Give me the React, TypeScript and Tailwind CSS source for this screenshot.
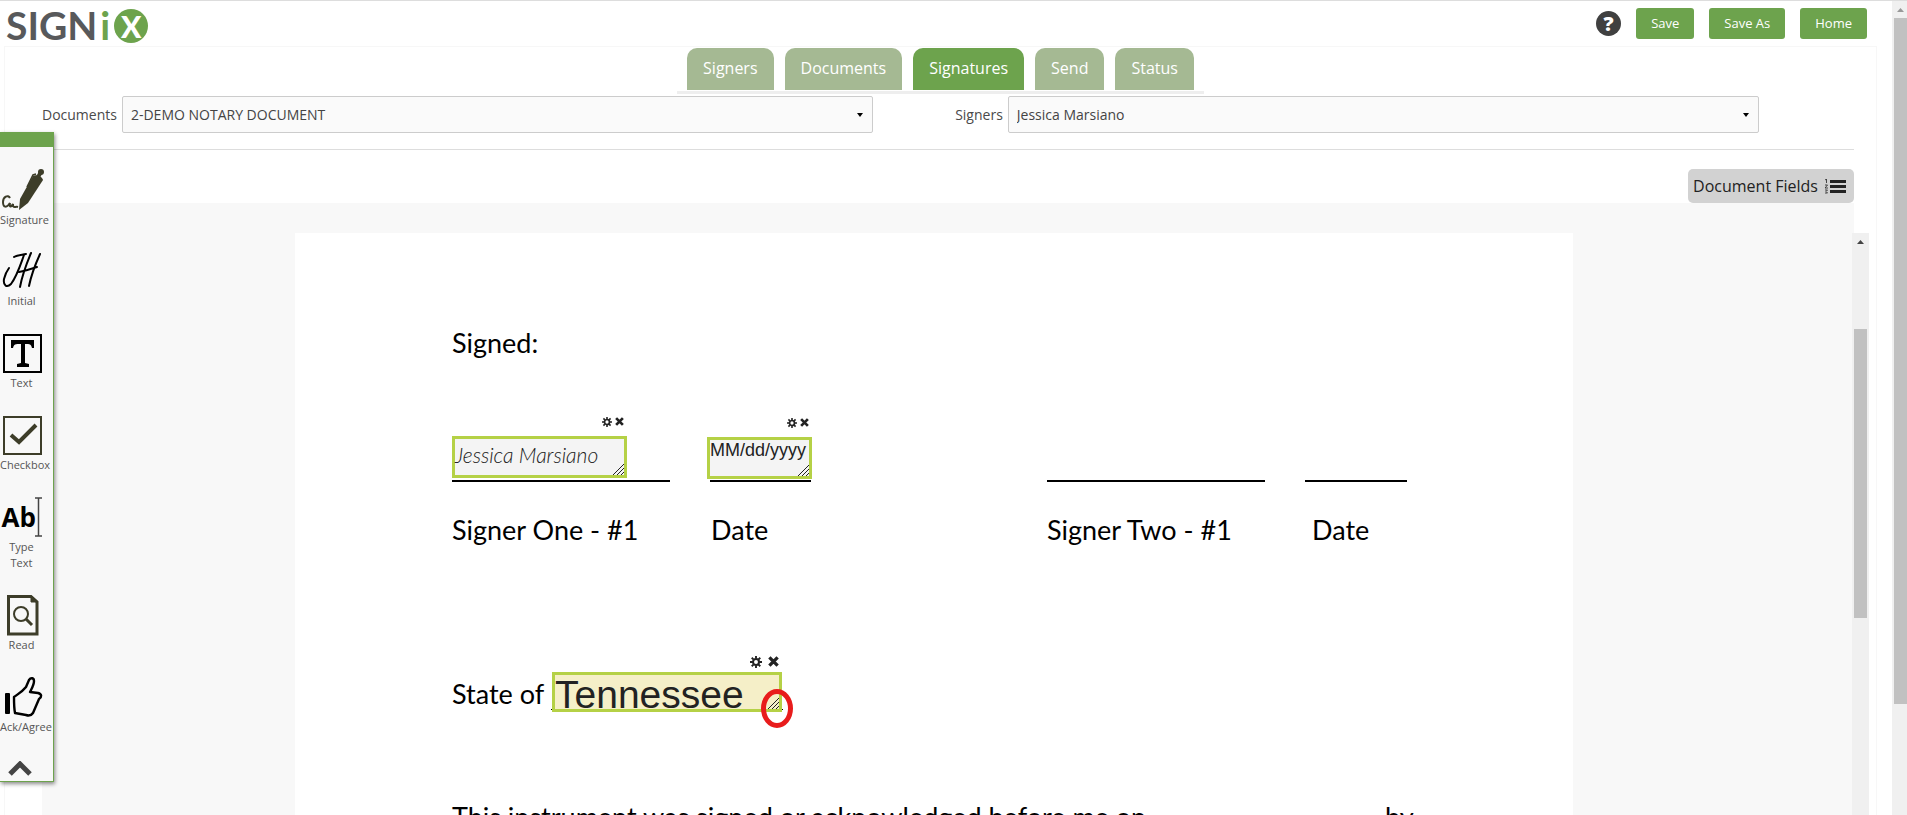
import { useState } from 'react'
import type { ReactNode } from 'react'

const TABS = ['Signers', 'Documents', 'Signatures', 'Send', 'Status']

const ACTIONS = ['Save', 'Save As', 'Home']

function SignatureIcon() {
  return (
    <svg className="w-11 h-11" viewBox="0 0 44 44" fill="none">
      <path d="M10 30C8 26 3 29 3 34C3 40 7 40 10 35C9 41 12 38 13 36C13 41 15 38 18 39" stroke="#3d3d29" strokeWidth="2" />
      <path d="M19 42L20 31L33 8C36 6 42 8 43 12L28 35Z" fill="#3d3d29" />
      <circle cx="41" cy="4" r="3" fill="#3d3d29" />
      <path d="M38 9L41 4" stroke="#3d3d29" strokeWidth="4" />
      <path d="M27 19L33 7L36 6" stroke="#3d3d29" strokeWidth="1.600" />
    </svg>
  )
}

function InitialIcon() {
  return (
    <svg className="w-11 h-11" viewBox="0 0 44 44" fill="none" stroke="#000" strokeWidth="2" strokeLinecap="round" strokeLinejoin="round">
      <path d="M14 8C17 6 21 6 26 5M24 6C20 17 17 27 11 35C7 39 3 37 4 30C5 26 6 23 9 19" />
      <path d="M31 4C26 16 22 27 20 38M40 5C35 16 31 27 29 37M19 23C25 22 31 20 37 18" />
    </svg>
  )
}

function TextIcon() {
  return (
    <svg className="w-11 h-11" viewBox="0 0 44 44" fill="none">
      <rect x="4" y="4" width="37" height="37" stroke="#000" strokeWidth="2" />
      <path d="M11 9H34V17H32C31 13 30 13 25 13V32L29 33V36H17V33L21 32V13C15 13 14 13 13 17H11Z" fill="#000" />
    </svg>
  )
}

function CheckboxIcon() {
  return (
    <svg className="w-11 h-11" viewBox="0 0 44 44" fill="none" stroke="#3d3d29">
      <rect x="4" y="4" width="37" height="37" strokeWidth="2" />
      <path d="M11 22L19 29L36 12" strokeWidth="4" />
    </svg>
  )
}

function ReadIcon() {
  return (
    <svg className="w-11 h-11" viewBox="0 0 44 44" fill="none" stroke="#3d3d29">
      <path d="M8.500 3.500H31L37 9V41H8.500Z" strokeWidth="3" />
      <path d="M31 3V9H38Z" fill="#3d3d29" />
      <circle cx="21" cy="21" r="7" strokeWidth="2" />
      <path d="M26 26L32 32" strokeWidth="3" />
    </svg>
  )
}

function AgreeIcon() {
  return (
    <svg className="w-11 h-11" viewBox="0 0 44 44" fill="none" stroke="#000" strokeLinejoin="round">
      <rect x="5" y="18" width="5" height="21" rx="1" fill="#000" stroke="none" />
      <path d="M14 22C18 19 22 17 26 12L29 5C31 2 34 3 34 6C34 10 32 13 30 17L38 18C42 19 42 22 39 24L33 38C31 41 29 41 26 40L15 38C14 33 14 27 14 22Z" strokeWidth="2.400" />
    </svg>
  )
}

function TypeTextIcon() {
  return (
    <span className="flex items-center w-11 h-11 pl-[2px] text-black">
      <span className="font-['Open_Sans'] font-bold text-[26px] leading-none">Ab</span>
      <svg className="w-[7px] h-10 shrink-0 -ml-px" viewBox="0 0 7 40" fill="none" stroke="#444" strokeWidth="1.500">
        <path d="M0 1H7M3.500 1V39M0 39H7" />
      </svg>
    </span>
  )
}

const TOOLS: { label: string; icon: ReactNode; height: string }[] = [
  { label: 'Signature', icon: <SignatureIcon />, height: 'h-[81px]' },
  { label: 'Initial', icon: <InitialIcon />, height: 'h-[82px]' },
  { label: 'Text', icon: <TextIcon />, height: 'h-[82px]' },
  { label: 'Checkbox', icon: <CheckboxIcon />, height: 'h-[82px]' },
  { label: 'Type Text', icon: <TypeTextIcon />, height: 'h-[98px]' },
  { label: 'Read', icon: <ReadIcon />, height: 'h-[82px]' },
  { label: 'Ack/Agree', icon: <AgreeIcon />, height: 'h-[82px]' },
]

function Logo() {
  return (
    <a href="#" aria-label="SIGNiX" className="flex items-center h-[35px] font-['Lato'] font-bold text-[39px] leading-none text-[#58595b]">
      SIGN<span className="ml-[3px] text-[#6da34d]">i</span>
      <span className="flex items-center justify-center size-[34px] ml-1 rounded-full bg-[#6da34d] text-white text-[30px] font-black">X</span>
    </a>
  )
}

function Picker({ id, label, value, className }: { id: string; label: string; value: string; className: string }) {
  return (
    <>
      <label htmlFor={id} className={`text-sm ${className}`}>
        {label}
      </label>
      <div className="relative flex-1">
        <select id={id} className="appearance-none w-full h-[37px] px-2 text-sm text-[#444] bg-[#fafafa] border border-[#ccc] rounded-xs">
          <option>{value}</option>
        </select>
        <svg className="absolute right-[10px] top-[17px] w-[6px] h-[4px] pointer-events-none" viewBox="0 0 6 4">
          <path d="M0 0H6L3 4Z" fill="#000" />
        </svg>
      </div>
    </>
  )
}

function Gear() {
  return (
    <svg className="size-full" viewBox="0 0 14 14" fill="none" stroke="#222">
      <circle cx="7" cy="7" r="3.500" strokeWidth="2.400" />
      <path d="M7 0V3M7 11V14M0 7H3M11 7H14M2 2L4 4M10 10L12 12M12 2L10 4M4 10L2 12" strokeWidth="2.200" />
    </svg>
  )
}

function Cross() {
  return (
    <svg className="size-full" viewBox="0 0 12 12" fill="none" stroke="#222" strokeWidth="3.600">
      <path d="M1.500 1.500L10.500 10.500M10.500 1.500L1.500 10.500" />
    </svg>
  )
}

// Field dropped on the page, with its settings and remove controls above it
function Field({ className, small, children }: { className: string; small?: boolean; children: ReactNode }) {
  return (
    <div className={`absolute border-3 border-[#b5d146] ${className}`}>
      <div className={`absolute right-0 flex ${small ? '-top-[22px] gap-[3px]' : '-top-[19px] gap-[6px]'}`}>
        <button aria-label="Field settings" className={small ? 'size-[10px]' : 'size-[12px]'}>
          <Gear />
        </button>
        <button aria-label="Remove field" className={small ? 'size-[9px]' : 'size-[11px]'}>
          <Cross />
        </button>
      </div>
      {children}
      <svg className="absolute right-0 bottom-0 size-[11px]" viewBox="0 0 11 11" fill="none" stroke="#222">
        <path d="M0 11L11 0M4 11L11 4M8 11L11 8" />
      </svg>
    </div>
  )
}

function Toolbox() {
  return (
    <aside className="absolute left-0 top-[131px] w-[54px] bg-[#f8f8f8] border-r border-b border-[#6da34d] shadow-[1px_2px_4px_rgba(0,0,0,0.45)]">
      <div className="h-[15px] bg-[#6da34d]" />
      <div className="flex flex-col pt-[21px]">
        {TOOLS.map((tool) => (
          <button key={tool.label} className={`flex flex-col items-center w-[43px] ${tool.height}`}>
            {tool.icon}
            <span className="w-full text-center text-[11px] leading-4 text-[#555]">{tool.label}</span>
          </button>
        ))}
      </div>
      <button aria-label="Collapse" className="block ml-2 mt-1 mb-[5px]">
        <svg className="w-6 h-[15px]" viewBox="0 0 24 15" fill="none" stroke="#444" strokeWidth="5">
          <path d="M2 13L12 3L22 13" />
        </svg>
      </button>
    </aside>
  )
}

function Page() {
  return (
    <article className="flex-1 ml-[253px] mr-[279px] pl-[157px] pt-[94px] bg-white font-['Lato'] text-[27px] leading-8 text-black whitespace-nowrap">
      <p>Signed:</p>

      <div className="flex h-[123px]">
        <div className="relative w-[218px] border-b-2">
          <Field small className="left-0 bottom-[2px] w-[175px] h-[42px] bg-[#f4f4f4]">
            <span className="block font-light italic text-[21px] text-[#222]">Jessica Marsiano</span>
          </Field>
        </div>
        <div className="relative w-[101px] ml-10 border-b-2">
          <Field small className="-left-[3px] bottom-px w-[105px] h-[42px] bg-[#f4f4f4]">
            <span className="block font-['Liberation_Sans'] text-[18px] leading-5 text-[#222]">MM/dd/yyyy</span>
          </Field>
        </div>
        <div className="w-[218px] ml-[236px] border-b-2" />
        <div className="w-[102px] ml-10 border-b-2" />
      </div>

      <div className="flex mt-8">
        <p className="w-[259px]">Signer One - #1</p>
        <p className="w-[336px]">Date</p>
        <p className="w-[265px]">Signer Two - #1</p>
        <p>Date</p>
      </div>

      <div className="flex mt-[132px]">
        <p className="w-[99px]">State of</p>
        <div className="relative w-[232px] border-b">
          <Field className="left-px -bottom-[3px] w-[230px] h-[40px] bg-[#f5efc8]">
            <span className="block font-['Liberation_Sans'] text-[39px] leading-[39px] text-[#222]">Tennessee</span>
          </Field>
          <div className="absolute -right-[10px] -bottom-[19px] w-[32px] h-[39px] border-5 border-[#e81c1c] rounded-[50%]" />
        </div>
      </div>

      <div className="flex mt-[91px]">
        <p className="w-[933px]">This instrument was signed or acknowledged before me on</p>
        <p>by</p>
      </div>
    </article>
  )
}

export default function App() {
  const [tab, setTab] = useState('Signatures')

  return (
    <div className="flex h-screen overflow-hidden bg-white font-['Open_Sans',sans-serif] text-[#4a4a4a]">
      <div className="relative flex flex-col flex-1 border-t border-[#ddd]">
        <header className="flex items-start justify-between h-[45px] pl-[6px] pr-[25px] pt-[7px] shrink-0">
          <Logo />
          <div className="flex items-center gap-[15px]">
            <button aria-label="Help" className="flex items-center justify-center size-[25px] rounded-full bg-[#404040] text-white text-xl font-extrabold">
              ?
            </button>
            {ACTIONS.map((action) => (
              <button key={action} className="h-[31px] px-[15px] rounded-[3px] bg-[#6da34d] text-white text-[13px]">
                {action}
              </button>
            ))}
          </div>
        </header>

        <main className="flex flex-col flex-1 min-h-0 ml-1 mr-[15px] border-t border-x border-[#f7f7f7]">
          <nav className="flex justify-center gap-[11px] self-center px-[10px] pt-px border-b-3 border-[#eee]">
            {TABS.map((name) => (
              <button
                key={name}
                onClick={() => setTab(name)}
                className={`h-[42px] mb-px px-4 pb-[2px] rounded-t-[10px] text-white text-base ${tab === name ? 'bg-[#6da34d]' : 'bg-[#a5b993]'}`}
              >
                {name}
              </button>
            ))}
          </nav>

          <div className="flex items-center pl-[37px] pr-[117px] pt-[2px]">
            <Picker id="documents" label="Documents" value="2-DEMO NOTARY DOCUMENT" className="mr-[5px]" />
            <Picker id="signers" label="Signers" value="Jessica Marsiano" className="ml-[82px] mr-[5px]" />
          </div>

          <div className="flex justify-end ml-[37px] mr-[22px] mt-4 pt-[19px] border-t border-[#ddd]">
            <button className="flex items-center gap-[7px] h-[34px] pl-[5px] pr-2 rounded-[5px] bg-[#d2d2d2] text-[#222] text-base">
              Document Fields
              <svg className="w-[21px] h-[15px]" viewBox="0 0 21 15" fill="none" stroke="#222">
                <path d="M5 2.500H21M5 7.500H21M5 12.500H21" strokeWidth="3" />
                <path d="M0 1L1.500 0V4M0 6H2.500L0 9H3M0 11H2.500L1 12.500L2.500 14H0" strokeWidth="0.800" />
              </svg>
            </button>
          </div>

          <div className="ml-[37px] mr-[22px] h-[30px] shrink-0 bg-[#f8f8f8]" />

          <div className="flex flex-1 min-h-0 ml-[37px] mr-[7px]">
            <section className="flex flex-1 bg-[#f8f8f8] overflow-hidden">
              <Page />
            </section>
            <div className="w-[17px] px-[2px] bg-[#f0f0f0]">
              <svg className="w-[7px] h-[4px] mx-auto mt-[7px]" viewBox="0 0 7 4">
                <path d="M0 4H7L3.500 0Z" fill="#444" />
              </svg>
              <div className="h-[289px] mt-[85px] bg-[#c1c1c1]" />
            </div>
          </div>
        </main>

        <Toolbox />
      </div>

      <div className="w-[15px] pl-[2px] bg-[#f0f0f0] border-t border-[#ddd]">
        <svg className="w-[7px] h-[4px] mx-auto mt-[7px]" viewBox="0 0 7 4">
          <path d="M0 4H7L3.500 0Z" fill="#999" />
        </svg>
        <div className="h-[686px] mt-[6px] bg-[#c1c1c1]" />
      </div>
    </div>
  )
}
